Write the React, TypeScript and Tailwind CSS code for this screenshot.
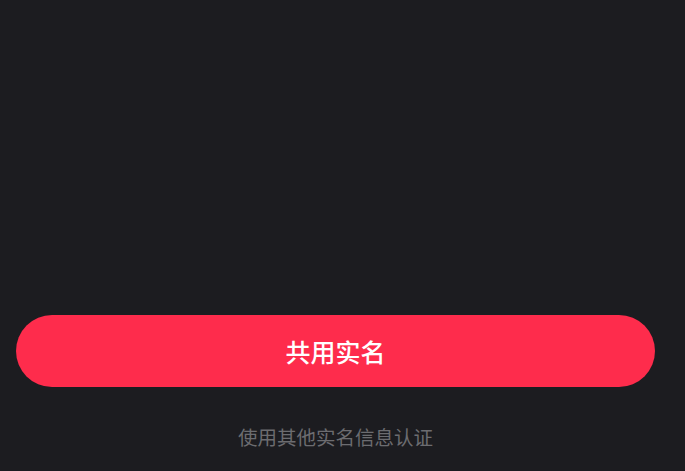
import React from "react";

const App = () => {
  return (
    <div
      className="w-[685px] h-[471px] bg-[#1c1c20] flex flex-col"
      style={{ fontFamily: '"Noto Sans CJK SC", "Noto Sans", sans-serif' }}
    >
      {/* empty content area */}
      <div className="flex-1" />

      <div className="ml-4 w-[639px] flex flex-col items-center">
        {/* primary action */}
        <button className="w-full h-[72px] rounded-full bg-[#fe2c4c] text-white text-[25px] leading-none font-medium flex items-center justify-center">
          共用实名
        </button>

        {/* secondary link */}
        <div className="mt-[37px] mb-[21px] h-[26px] flex items-center justify-center text-[19.5px] text-[#6c6c70]">
          使用其他实名信息认证
        </div>
      </div>
    </div>
  );
};

export default App;
